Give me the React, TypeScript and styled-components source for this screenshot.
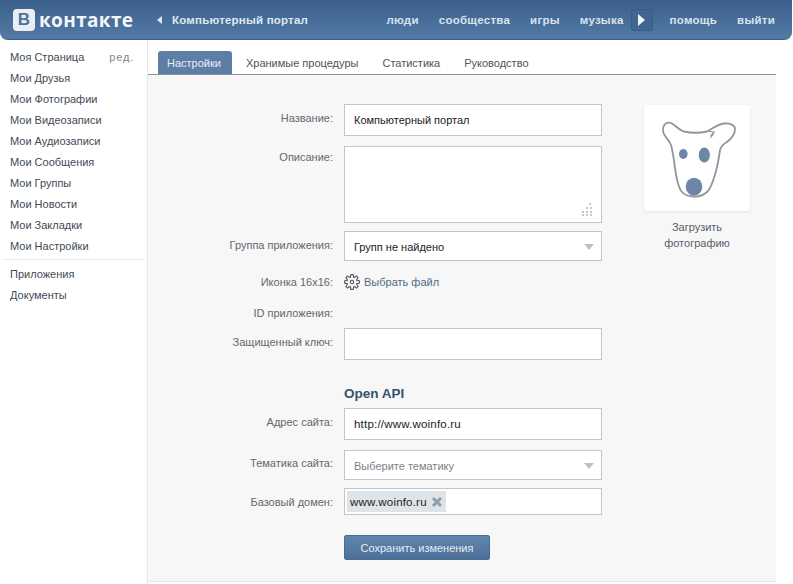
import React from "react";
import styled, { createGlobalStyle } from "styled-components";
import { VscSettingsGear } from "react-icons/vsc";

const sideLinks = [
  "Мои Друзья",
  "Мои Фотографии",
  "Мои Видеозаписи",
  "Мои Аудиозаписи",
  "Мои Сообщения",
  "Мои Группы",
  "Мои Новости",
  "Мои Закладки",
  "Мои Настройки",
];

const topLinks = ["люди", "сообщества", "игры", "музыка"];
const tabs = ["Настройки", "Хранимые процедуры", "Статистика", "Руководство"];

export default function App() {
  return (
    <Page>
      <GlobalStyle />
      <Header>
        <Logo>
          <LogoBox>В</LogoBox>
          <LogoText>контакте</LogoText>
        </Logo>
        <BackArrow />
        <Crumb>Компьютерный портал</Crumb>
        <TopNav>
          {topLinks.map((l) => (
            <TopLink key={l}>{l}</TopLink>
          ))}
          <PlayButton>
            <PlayArrow />
          </PlayButton>
          <TopLink>помощь</TopLink>
          <TopLink>выйти</TopLink>
        </TopNav>
      </Header>
      <Body>
        <Sidebar>
          <MyPage>
            <SideLink>Моя Страница</SideLink>
            <Edit>ред.</Edit>
          </MyPage>
          {sideLinks.map((l) => (
            <SideLink key={l}>{l}</SideLink>
          ))}
          <SideDivider />
          <SideLink>Приложения</SideLink>
          <SideLink>Документы</SideLink>
        </Sidebar>
        <Content>
          <TabBar>
            {tabs.map((t, i) => (
              <Tab key={t} $active={i === 0}>
                {t}
              </Tab>
            ))}
          </TabBar>
          <Panel>
            <Form>
              <Row $top={0}>
                <Label>Название:</Label>
                <Field $h={32}>Компьютерный портал</Field>
              </Row>
              <Row $top={10}>
                <Label $pad={4}>Описание:</Label>
                <Field $h={77}>
                  <Grip viewBox="0 0 14 14">
                    {[
                      [10, 1],
                      [7, 5],
                      [11, 5],
                      [3, 9],
                      [7, 9],
                      [11, 9],
                      [3, 12],
                      [7, 12],
                      [11, 12],
                    ].map(([x, y]) => (
                      <rect key={`${x}-${y}`} x={x} y={y} width="2" height="2" fill="#c4c8cc" />
                    ))}
                  </Grip>
                </Field>
              </Row>
              <Row $top={8}>
                <Label>Группа приложения:</Label>
                <Field $h={30}>
                  Групп не найдено
                  <Caret />
                </Field>
              </Row>
              <Row $top={14}>
                <Label $pad={0}>Иконка 16x16:</Label>
                <FilePick>
                  <VscSettingsGear size={16} color="#5a5f64" />
                  Выбрать файл
                </FilePick>
              </Row>
              <Row $top={17}>
                <Label $pad={0}>ID приложения:</Label>
              </Row>
              <Row $top={8}>
                <Label>Защищенный ключ:</Label>
                <Field $h={32} />
              </Row>
              <Row $top={26}>
                <Spacer />
                <SectionTitle>Open API</SectionTitle>
              </Row>
              <Row $top={6}>
                <Label>Адрес сайта:</Label>
                <Field $h={32}>
                  <Latin>http://www.woinfo.ru</Latin>
                </Field>
              </Row>
              <Row $top={10}>
                <Label $pad={6}>Тематика сайта:</Label>
                <Field $h={30} $muted>
                  Выберите тематику
                  <Caret />
                </Field>
              </Row>
              <Row $top={8}>
                <Label>Базовый домен:</Label>
                <TagField>
                  <Tag>
                    <Latin>www.woinfo.ru</Latin>
                    <TagClose viewBox="0 0 12 12">
                      <path d="M2 2 L10 10 M10 2 L2 10" stroke="#8da0b3" strokeWidth="3" />
                    </TagClose>
                  </Tag>
                </TagField>
              </Row>
              <Row $top={20}>
                <Spacer />
                <SaveButton>Сохранить изменения</SaveButton>
              </Row>
            </Form>
            <AvatarColumn>
              <AvatarCard>
                <svg width="106" height="106" viewBox="0 0 106 106">
                  <path
                    d="M19.5 21.5 C21 18 24 17 27 18 C31 20 35 25 40 26.5 C47 28 56 28 63 26.5 C68 24 74 19 80 18.5 C86 18 91 20 91 24 C91 30 87 34 83 37 C79 39 77 41 76 45 C75 52 74 59 72 66 C70 73 68 81 64 86 C60 90 54 92 49 91.5 C43 91 38 89 36 84 C33 78 32 70 31 63 C30 55 29 47 27 40 C25 35 21 32 19.5 28 C19 26 19 23 19.5 21.5 Z"
                    fill="none"
                    stroke="#8f969c"
                    strokeWidth="1.8"
                  />
                  <path d="M65 26.5 L70 27 L67.5 30 L69 29.5 L66.5 33" fill="none" stroke="#8f969c" strokeWidth="1.2" />
                  <ellipse cx="39.3" cy="49" rx="4.3" ry="5" fill="#6b86a6" />
                  <ellipse cx="60.3" cy="50" rx="5.6" ry="7.6" fill="#6b86a6" />
                  <ellipse cx="50" cy="81.7" rx="8.3" ry="9" fill="#6b86a6" />
                </svg>
              </AvatarCard>
              <AvatarCaption>
                Загрузить
                <br />
                фотографию
              </AvatarCaption>
            </AvatarColumn>
          </Panel>
        </Content>
      </Body>
    </Page>
  );
}

const GlobalStyle = createGlobalStyle`
  html, body {
    margin: 0;
    padding: 0;
    background: #fff;
    overflow: hidden;
  }
  * {
    box-sizing: border-box;
  }
`;

const Page = styled.div`
  width: 793px;
  height: 584px;
  font-family: "Liberation Sans", Arial, sans-serif;
  font-size: 11px;
  color: #444;
  overflow: hidden;
`;

const Header = styled.header`
  height: 40px;
  width: 792px;
  display: flex;
  align-items: center;
  padding-left: 13px;
  border-radius: 0 0 8px 8px;
  background: linear-gradient(180deg, #3b5f8a 0%, #527ba6 100%);
  border-bottom: 1px solid #3d5f85;
`;

const Logo = styled.div`
  display: flex;
  align-items: center;
  gap: 4px;
  width: 144px;
`;

const LogoBox = styled.div`
  width: 22px;
  height: 22px;
  border-radius: 4px;
  background: #e9eef4;
  color: #4f7299;
  font-weight: bold;
  font-size: 17px;
  display: flex;
  align-items: center;
  justify-content: center;
`;

const LogoText = styled.span`
  color: #f2f5f9;
  font-family: "Open Sans", sans-serif;
  font-weight: 700;
  font-size: 19px;
  letter-spacing: 0.35px;
  line-height: 22px;
`;

const BackArrow = styled.span`
  width: 0;
  height: 0;
  border-top: 4px solid transparent;
  border-bottom: 4px solid transparent;
  border-right: 5px solid #dfe7f0;
  margin-right: 10px;
`;

const Crumb = styled.span`
  color: #dfe8f2;
  font-weight: bold;
  font-size: 11.5px;
  letter-spacing: 0.2px;
`;

const TopNav = styled.nav`
  margin-left: auto;
  margin-right: 17px;
  display: flex;
  align-items: center;
`;

const TopLink = styled.span`
  color: #d9e3ee;
  font-weight: bold;
  font-size: 11.5px;
  letter-spacing: 0.25px;
  margin-left: 20px;
`;

const PlayButton = styled.span`
  width: 22px;
  height: 22px;
  margin-left: 7px;
  margin-right: -3px;
  border-radius: 2px;
  background: #3f6590;
  border: 1px solid #3a5c84;
  display: flex;
  align-items: center;
  justify-content: center;
`;

const PlayArrow = styled.span`
  width: 0;
  height: 0;
  border-top: 6px solid transparent;
  border-bottom: 6px solid transparent;
  border-left: 7px solid #edf2f7;
`;

const Body = styled.div`
  display: flex;
  height: 544px;
`;

const Sidebar = styled.aside`
  width: 148px;
  padding: 7px 4px 0 10px;
  border-right: 1px solid #e4e7ea;
  color: #3f4a55;
`;

const MyPage = styled.div`
  display: flex;
  justify-content: space-between;
  padding-right: 9px;
`;

const SideLink = styled.div`
  height: 21px;
  line-height: 21px;
`;

const Edit = styled.span`
  line-height: 21px;
  color: #80868c;
  letter-spacing: 0.8px;
`;

const SideDivider = styled.div`
  height: 1px;
  margin: 2px 0 4px -6px;
  background: #e8eaec;
`;

const Content = styled.main`
  width: 628px;
  display: flex;
  flex-direction: column;
`;

const TabBar = styled.div`
  height: 35px;
  display: flex;
  align-items: flex-end;
  padding-left: 10px;
  border-bottom: 1px solid #8a929a;
`;

const Tab = styled.div<{ $active?: boolean }>`
  height: 23px;
  line-height: 24px;
  padding: ${(p) => (p.$active ? "0 11px 0 9px" : "0 9px")};
  margin-right: ${(p) => (p.$active ? "5px" : "6px")};
  border-radius: 3px 3px 0 0;
  background: ${(p) => (p.$active ? "#5d7fa5" : "transparent")};
  color: ${(p) => (p.$active ? "#e8eef5" : "#4a5560")};
`;

const Panel = styled.div`
  height: 507px;
  background: #f7f7f7;
  border-bottom: 1px solid #e6e6e6;
  display: flex;
  padding-top: 29px;
`;

const Form = styled.div`
  width: 454px;
`;

const Row = styled.div<{ $top: number }>`
  display: flex;
  gap: 11px;
  margin-top: ${(p) => p.$top}px;
`;

const Label = styled.div<{ $pad?: number }>`
  width: 185px;
  text-align: right;
  color: #62686e;
  padding-top: ${(p) => p.$pad ?? 7}px;
  line-height: 14px;
`;

const Spacer = styled.div`
  width: 185px;
`;

const Field = styled.div<{ $h: number; $muted?: boolean }>`
  position: relative;
  width: 258px;
  height: ${(p) => p.$h}px;
  padding: 8px 9px;
  line-height: 14px;
  background: #fff;
  border: 1px solid #c3c6c9;
  color: ${(p) => (p.$muted ? "#7b8188" : "#222")};
`;

const Latin = styled.span`
  font-size: 11.5px;
  letter-spacing: 0.2px;
`;

const Caret = styled.span`
  position: absolute;
  right: 7px;
  top: 12px;
  width: 0;
  height: 0;
  border-left: 5px solid transparent;
  border-right: 5px solid transparent;
  border-top: 6px solid #bcc1c6;
`;

const Grip = styled.svg`
  position: absolute;
  right: 8px;
  bottom: 6px;
  width: 14px;
  height: 14px;
`;

const FilePick = styled.div`
  display: flex;
  align-items: center;
  gap: 4px;
  height: 14px;
  color: #506a87;
`;

const SectionTitle = styled.div`
  font-weight: bold;
  font-size: 13.5px;
  line-height: 16px;
  color: #34536f;
`;

const TagField = styled.div`
  width: 258px;
  height: 27px;
  padding: 2px;
  background: #fff;
  border: 1px solid #c3c6c9;
`;

const Tag = styled.div`
  display: inline-flex;
  align-items: center;
  gap: 4px;
  height: 21px;
  padding: 0 3px;
  background: #dfe4e9;
  color: #222;
`;

const TagClose = styled.svg`
  width: 12px;
  height: 12px;
`;

const SaveButton = styled.button`
  width: 146px;
  height: 25px;
  padding: 0;
  border: 1px solid #4a6d94;
  border-radius: 2px;
  background: linear-gradient(180deg, #5f86ad 0%, #4d7099 100%);
  color: #e6edf4;
  font: inherit;
`;

const AvatarColumn = styled.div`
  width: 106px;
  margin-left: 42px;
  margin-top: 1px;
`;

const AvatarCard = styled.div`
  width: 106px;
  height: 106px;
  background: #fff;
  border-radius: 3px;
  box-shadow: 0 1px 3px rgba(0, 0, 0, 0.08);
  display: flex;
`;

const AvatarCaption = styled.div`
  margin-top: 8px;
  text-align: center;
  line-height: 16px;
  color: #56606a;
`;
